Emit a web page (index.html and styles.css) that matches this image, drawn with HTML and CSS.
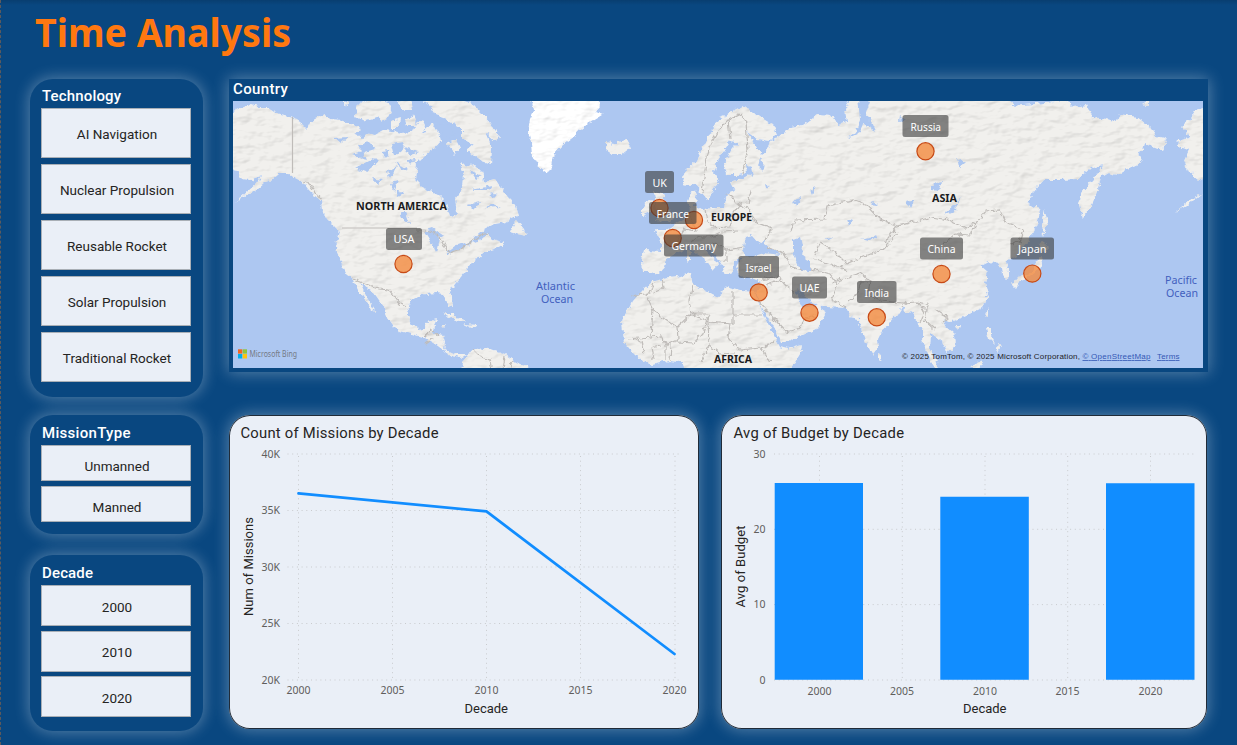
FILE: index.html
```html
<!DOCTYPE html>
<html lang="en">
<head>
<meta charset="utf-8">
<title>Time Analysis</title>
<link rel="stylesheet" href="styles.css">
</head>
<body>
<div class="page">
  <h1 class="title"><svg width="270" height="60"><text x="0" y="47" textLength="256" lengthAdjust="spacingAndGlyphs">Time Analysis</text></svg></h1>
  <div class="board">
    <aside class="sidebar">
      <section class="panel tech">
        <h2>Technology</h2>
        <button>AI Navigation</button>
        <button>Nuclear Propulsion</button>
        <button>Reusable Rocket</button>
        <button>Solar Propulsion</button>
        <button>Traditional Rocket</button>
      </section>
      <section class="panel mission">
        <h2>MissionType</h2>
        <button>Unmanned</button>
        <button>Manned</button>
      </section>
      <section class="panel decade">
        <h2>Decade</h2>
        <button>2000</button>
        <button>2010</button>
        <button>2020</button>
      </section>
    </aside>
    <main class="content">
      <section class="map-card">
        <h2>Country</h2>
        <svg class="map" viewBox="233 101 970 267">
          <defs>
            <filter id="relief" x="233" y="95" width="970" height="280" filterUnits="userSpaceOnUse" color-interpolation-filters="sRGB">
              <feTurbulence type="fractalNoise" baseFrequency="0.2" numOctaves="3" seed="4" result="n"/>
              <feDisplacementMap in="SourceGraphic" in2="n" scale="6" xChannelSelector="R" yChannelSelector="G" result="land"/>
              <feTurbulence type="fractalNoise" baseFrequency="0.05 0.1" numOctaves="3" seed="9" result="h"/>
              <feDiffuseLighting in="h" surfaceScale="0.75" diffuseConstant="1.13" lighting-color="#fff" result="light"><feDistantLight azimuth="225" elevation="62"/></feDiffuseLighting>
              <feBlend in="land" in2="light" mode="multiply" result="b"/>
              <feComposite in="b" in2="land" operator="in"/>
            </filter>
            <filter id="rough" x="233" y="95" width="970" height="280" filterUnits="userSpaceOnUse">
              <feTurbulence type="fractalNoise" baseFrequency="0.2" numOctaves="2" seed="3" result="n"/>
              <feDisplacementMap in="SourceGraphic" in2="n" scale="6" xChannelSelector="R" yChannelSelector="G"/>
            </filter>
          </defs>
          <rect x="233" y="101" width="970" height="267" fill="#adc7f1"/>
          <g class="land" filter="url(#relief)">
            <!-- North and Central America -->
            <path d="M225 116L238 109 244 107 252 104 260 107 268 107 277 113 292 117 300 122 307 129 310 123 315 119 325 114 330 119 342 120 358 127 366 133 375 135 384 130 392 131 402 133 412 132 416 124 422 119 425 125 423 133 430 131 438 129 441 141 433 150 425 155 417 163 415 179 425 189 438 195 446 203 450 216 454 219 457 212 455 199 463 189 464 175 460 163 468 166 475 165 482 172 485 182 495 179 502 189 508 197 515 205 518 215 505 222 494 224 485 229 474 238 466 246 477 241 488 235 493 239 505 243 497 248 482 253 476 260 472 262 465 272 455 284 450 292 452 299 453 307 449 306 443 294 437 293 425 294 412 299 409 306 408 315 412 325 418 330 425 329 427 322 437 319 434 325 433 333 443 335 445 342 444 349 455 354 466 354 460 358 449 355 438 346 425 338 412 334 400 331 392 325 387 318 385 309 378 300 371 290 360 283 364 292 369 301 376 312 371 310 366 301 358 290 353 279 347 274 341 262 337 252 336 245 340 232 335 227 327 219 322 210 321 201 314 195 308 189 303 182 295 178 288 173 278 173 270 180 265 182 258 188 247 195 235 203 247 192 257 183 262 176 250 180 242 179 237 171 225 169Z"/>
            <path d="M462 380L463 361 472 349 477 350 485 347 494 350 505 354 515 362 530 368 530 380Z"/>
            <!-- Arctic islands -->
            <path d="M355 115L358 105 371 98 388 102 392 109 386 121 377 118 366 121ZM397 101L414 98 417 109 402 111ZM391 121L401 118 398 128 391 128ZM405 120L416 114 415 126 407 126ZM420 98L452 96 467 101 474 106 485 117 493 127 500 137 496 142 486 133 492 147 491 164 482 161 474 155 467 150 473 145 462 138 462 128 447 119 436 115 430 106ZM424 128L433 124 437 134 428 135ZM447 144L456 140 460 148 455 155ZM344 100L350 103 344 105Z"/>
            <path d="M516 220L524 229 526 236 517 234 511 232Z"/>
            <path d="M443 314L453 314 466 321 459 321ZM463 324L479 325 474 329ZM440 325L445 325 443 327ZM242 318L248 321 254 324"/>
            <!-- Greenland, Iceland and British Isles -->
            <path class="ice" d="M524 96L532 101 534 111 530 119 528 131 531 143 532 155 537 165 548 173 552 166 554 155 563 145 575 136 578 131 588 124 603 115 595 112 600 106 598 96Z"/>
            <path d="M606 141L612 142 611 147 617 142 627 140 630 148 622 154 612 154 606 150Z"/>
            <path d="M642 207L650 200 655 204 653 211 642 216ZM654 192L666 195 662 202 668 208 675 216 669 222 655 221 662 215 657 209Z"/>
            <!-- Eurasia -->
            <path d="M681 185L685 171 695 162 702 149 708 138 715 124 730 112 743 106 757 115 773 125 777 134 770 141 757 139 747 132 757 148 762 154 766 151 770 142 782 135 790 127 803 125 817 115 833 116 838 125 847 122 845 109 853 97 1013 97 1013 106 1067 101 1073 107 1087 105 1092 117 1107 119 1117 122 1120 114 1137 117 1150 127 1157 137 1168 140 1163 150 1150 145 1145 143 1143 150 1138 153 1142 162 1127 169 1117 175 1108 173 1101 177 1098 189 1093 202 1083 219 1079 205 1082 192 1093 179 1103 165 1090 169 1077 179 1060 180 1043 180 1033 192 1028 204 1040 209 1038 222 1032 235 1017 255 1005 262 1009 269 1008 279 1003 278 1001 268 998 264 989 262 981 266 988 272 985 282 988 295 982 308 963 317 950 322 943 319 945 326 955 335 956 345 947 353 943 342 931 333 930 350 936 360 940 372 932 365 927 352 923 340 923 329 917 324 913 312 906 313 902 307 897 315 889 324 883 329 878 339 879 347 873 355 867 345 862 332 859 319 850 317 846 308 827 307 808 302 797 290 796 293 803 308 814 306 820 302 825 315 818 328 803 335 785 342 781 342 777 332 769 320 760 304 757 293 761 282 754 279 740 277 736 267 741 258 733 262 732 272 726 274 722 265 716 256 706 246 700 245 712 258 719 263 713 270 707 261 697 254 691 248 684 250 676 253 667 258 665 267 659 274 650 272 643 272 642 260 644 250 661 251 661 240 654 230 667 230 678 222 687 217 690 211 688 200 693 190 697 193 694 206 703 209 715 208 724 208 727 193 735 190 731 182 745 177 753 172 738 175 727 175 724 163 732 149 738 143 730 141 724 151 718 160 714 172 719 183 712 192 707 200 701 193 696 183 689 186Z"/>
            <!-- Africa -->
            <path d="M642 291L652 282 662 279 677 277 691 273 694 285 704 290 719 298 725 286 740 290 755 291 757 299 763 313 771 330 780 347 787 349 802 345 800 354 789 372 685 372 681 362 668 361 652 365 641 360 634 354 624 342 623 333 622 320 627 312 632 302Z"/>
            <!-- Pacific islands and western Alaska -->
            <path d="M1044 209L1048 222 1045 230 1043 236 1042 220ZM1041 241L1049 247 1044 252 1037 250ZM1041 257L1042 265 1037 271 1027 279 1020 281 1016 288 1012 284 1019 276 1031 273 1037 260ZM988 309L988 315 985 317ZM986 328L991 328 991 336 995 345 988 338ZM998 343L1002 345 996 352ZM956 325L960 325 958 329ZM970 367L982 361 980 370ZM1210 106L1196 110 1190 120 1181 126 1188 133 1190 138 1179 140 1178 147 1189 150 1184 161 1188 171 1199 180 1210 184ZM1203 193L1188 205 1175 212 1190 200ZM878 353L882 355 881 361 878 360ZM1142 104L1149 100 1149 106ZM687 252L690 250 690 262 687 263ZM719 117L725 115 723 120Z"/>
          </g>
          <g class="water" filter="url(#rough)">
            <!-- lakes, inland seas and gulfs -->
            <path d="M746 237L752 235 760 244 768 238 764 244 781 255 764 253 748 258 743 251ZM793 240L801 237 803 246 802 256 810 262 810 272 801 271 797 262 793 252ZM797 289L809 298 814 305 804 303ZM858 98L860 120 855 133 847 139 860 133 864 124 876 131 871 120 865 116 870 102ZM760 157L764 163 762 172 758 166ZM746 165L751 167 753 177 747 173ZM944 215L955 205 961 196 955 210ZM1010 101L1015 105 1022 101 1018 96 1010 96Z"/>
            <path d="M424 231L433 228 443 235 439 239 436 252 432 244ZM447 255L459 249 467 247 464 242 458 244 447 252ZM400 212L406 212 410 224 404 222ZM354 133L365 127 374 129 362 137ZM334 138L348 137 340 143ZM358 146L369 142 375 149 362 153ZM352 154L362 151 366 160ZM355 168L374 158 378 162 366 172ZM391 144L404 142 401 151 394 156ZM388 171L397 166 390 178ZM390 183L398 181 394 192ZM396 162L402 171 408 170ZM372 178L382 180 377 184ZM404 147L418 152 410 156ZM380 151L391 150 386 158ZM396 190L404 194 398 197ZM407 160L416 159 411 165Z"/>
            <path d="M410 98L424 100 421 112 424 119 417 121 412 109ZM434 125L450 123 455 134 448 139 440 132ZM794 200L801 198 796 207ZM810 190L815 187 812 194ZM861 239L877 235 870 241ZM871 204L873 201 878 204 874 207ZM847 219L852 221 849 226ZM825 238L832 237 828 241ZM932 184L941 182 939 191 932 190ZM957 158L965 163 959 168ZM900 115L906 120 899 122ZM765 184L770 186 766 188ZM907 202L914 200 910 208Z"/>
            <path d="M470 170L482 176 476 179ZM470 190L492 186 489 190ZM467 205L480 202 476 209ZM485 208L493 204 500 207ZM489 193L498 195 495 198Z"/>
          </g>
          <g class="borders" filter="url(#rough)">
            <path d="M307 181L316 193 321 199M417 230L425 230 434 232 443 241 449 253 462 249 480 235 490 233M353 279L379 289 389 290 400 304 406 307M425 336L431 330 439 336M303 182L307 181M425 344L433 338"/>
            <path d="M702 192L705 170 709 148 719 129 728 120 739 114 746 122 748 150 742 174M728 120L730 139M727 193L738 204 750 210 755 222 771 228 765 240M748 204L751 190M710 228L730 227 733 213 742 201M690 213L696 231 684 229 676 241M690 241L700 237 712 237 723 232 737 231M713 242L726 250 744 247M726 250L726 262M705 209L707 222 717 228M791 232L795 220 825 219 828 206 852 200 867 206 878 218 897 226 914 222 932 217 948 220 965 228 977 222 986 211 1000 210 1006 222 1023 230 1019 242 1011 244M897 226L888 237 886 248 863 257 847 264 835 252 820 243 815 255M812 258L834 265 848 271M767 247L785 255 791 267 803 270M762 280L778 276 786 286 795 292M765 285L780 280M757 300L786 332 801 328 803 320 817 315M810 268L830 274 838 285 831 300 847 308M831 283L851 276 861 273 870 281 868 295 880 301 903 303 917 302 924 310 920 322M848 302L858 292 861 281 870 281M917 302L928 304 925 320 935 329M935 309L948 318 942 323M886 248L898 232M977 222L970 235 955 234 943 244M906 301L902 307"/>
            <path d="M654 281L650 293 631 296M645 293L653 309 651 337 627 339M651 309L677 327 691 314 709 314M693 285L689 300 691 313 708 322 733 324V292M677 327L678 340 666 345 661 336 651 337M644 353L641 342 633 338M653 360L651 348 661 346M666 345V360M671 344L670 361M709 314L703 333 694 343 676 342M708 322L709 345 700 362M733 315H762M730 324L728 338 739 350 762 348 774 341M762 348L770 363M709 345L720 354 734 353M662 278L664 288 653 293"/>
            <path d="M473 350L480 357 490 360 492 370M505 356L503 370M512 362L508 370"/>
          </g>
          <path class="borders" d="M292.500 117V173M342 228H417"/>
          <g class="region">
            <text x="356" y="210" textLength="91" lengthAdjust="spacingAndGlyphs">NORTH AMERICA</text>
            <text x="711" y="221" textLength="41" lengthAdjust="spacingAndGlyphs">EUROPE</text>
            <text x="932" y="202" textLength="25" lengthAdjust="spacingAndGlyphs">ASIA</text>
            <text x="714" y="363" textLength="38" lengthAdjust="spacingAndGlyphs">AFRICA</text>
          </g>
          <g class="ocean">
            <text x="536" y="290" textLength="39" lengthAdjust="spacingAndGlyphs">Atlantic</text><text x="541" y="303" textLength="32" lengthAdjust="spacingAndGlyphs">Ocean</text>
            <text x="1165" y="284" textLength="32" lengthAdjust="spacingAndGlyphs">Pacific</text><text x="1166" y="297" textLength="32" lengthAdjust="spacingAndGlyphs">Ocean</text>
          </g>
          <g class="dots">
            <circle cx="403.5" cy="264" r="8.6"/><circle cx="659.5" cy="208" r="8.6"/><circle cx="694" cy="220" r="8.6"/><circle cx="672.7" cy="238" r="8.6"/><circle cx="758.7" cy="292.4" r="8.6"/><circle cx="809.5" cy="312.7" r="8.6"/><circle cx="876.8" cy="317.3" r="8.6"/><circle cx="941.5" cy="274" r="8.6"/><circle cx="925.5" cy="151.3" r="8.6"/><circle cx="1032.3" cy="273.6" r="8.6"/>
          </g>
          <g class="tags">
            <rect x="386" y="228" width="36" height="22" rx="2.500"/><rect x="645" y="171" width="29" height="22" rx="2.500"/><rect x="649" y="202" width="47.500" height="22" rx="2.500"/><rect x="664" y="234.500" width="59.500" height="22" rx="2.500"/><rect x="738.500" y="256" width="40.500" height="22" rx="2.500"/><rect x="792" y="276.500" width="35" height="22" rx="2.500"/><rect x="857" y="281" width="39.500" height="22" rx="2.500"/><rect x="920" y="237.500" width="43" height="22" rx="2.500"/><rect x="902.500" y="115" width="46" height="22" rx="2.500"/><rect x="1010.500" y="237.500" width="43.500" height="22" rx="2.500"/>
            <text x="393.500" y="243" textLength="21" lengthAdjust="spacingAndGlyphs">USA</text><text x="652.500" y="187" textLength="14.500" lengthAdjust="spacingAndGlyphs">UK</text><text x="656.500" y="218" textLength="32.500" lengthAdjust="spacingAndGlyphs">France</text><text x="671.500" y="250" textLength="45" lengthAdjust="spacingAndGlyphs">Germany</text><text x="745.500" y="272" textLength="26" lengthAdjust="spacingAndGlyphs">Israel</text><text x="799.500" y="292" textLength="20" lengthAdjust="spacingAndGlyphs">UAE</text><text x="864.500" y="297" textLength="24.500" lengthAdjust="spacingAndGlyphs">India</text><text x="927.500" y="253" textLength="28" lengthAdjust="spacingAndGlyphs">China</text><text x="910.500" y="131" textLength="30.500" lengthAdjust="spacingAndGlyphs">Russia</text><text x="1018" y="253" textLength="28.500" lengthAdjust="spacingAndGlyphs">Japan</text>
          </g>
          <path fill="#f26522" d="M238 349.300h4.300v4.300H238z"/><path fill="#8dc63f" d="M242.700 349.300h4.300v4.300h-4.300z"/><path fill="#00aeef" d="M238 354h4.300v4.500H238z"/><path fill="#ffc20e" d="M242.700 354h4.300v4.500h-4.300z"/>
          <text class="bing" x="249.500" y="357" textLength="47.500" lengthAdjust="spacingAndGlyphs">Microsoft Bing</text>
          <g class="credit"><text x="902" y="359" textLength="178">© 2025 TomTom, © 2025 Microsoft Corporation,</text><text class="link" x="1082.500" y="359" textLength="68">© OpenStreetMap</text><text class="link" x="1157" y="359" textLength="22.500">Terms</text></g>
        </svg>
      </section>
      <div class="charts">
        <section class="chart">
          <svg width="470" height="314" viewBox="229 415 470 314">
            <text class="heading" x="240.500" y="438" textLength="198">Count of Missions by Decade</text>
            <path class="gridline" d="M287.500 454H681M287.500 510.500H681M287.500 567H681M287.500 623.500H681M287.500 680H681M298.500 456V680M392.500 456V680M486.500 456V680M580.500 456V680M675 456V680"/>
            <g class="tick end"><text x="280" y="458">40K</text><text x="280" y="514">35K</text><text x="280" y="571">30K</text><text x="280" y="627">25K</text><text x="280" y="684">20K</text></g>
            <g class="tick mid"><text x="298.500" y="694">2000</text><text x="392.500" y="694">2005</text><text x="486.500" y="694">2010</text><text x="580.500" y="694">2015</text><text x="674.500" y="694">2020</text></g>
            <path class="line" d="M298.500 493.300L486.500 511.400L674.500 654"/>
            <text class="axis" x="464.500" y="713" textLength="43.500">Decade</text>
            <text class="axis" transform="translate(253 616) rotate(-90)" textLength="99">Num of Missions</text>
          </svg>
        </section>
        <section class="chart">
          <svg width="486" height="314" viewBox="721 415 486 314">
            <text class="heading" x="733.500" y="438" textLength="170.500">Avg of Budget by Decade</text>
            <path class="gridline" d="M774 454H1195M774 529.300H1195M774 604.600H1195M774 680H1195M819.500 456V680M902.300 456V680M985 456V680M1067.700 456V680M1150.500 456V680"/>
            <g class="tick end"><text x="765.500" y="458">30</text><text x="765.500" y="533">20</text><text x="765.500" y="608">10</text><text x="765.500" y="684">0</text></g>
            <g class="tick mid"><text x="819.500" y="695">2000</text><text x="902" y="695">2005</text><text x="985" y="695">2010</text><text x="1067.500" y="695">2015</text><text x="1150.500" y="695">2020</text></g>
            <path class="bar" d="M774.700 483H863v196.700h-88.300zM940.300 496.700h88.500v183h-88.500zM1106 483.300h88.500v196.400H1106z"/>
            <text class="axis" x="963" y="713" textLength="43.500">Decade</text>
            <text class="axis" transform="translate(745 607.500) rotate(-90)" textLength="82">Avg of Budget</text>
          </svg>
        </section>
      </div>
    </main>
  </div>
</div>
</body>
</html>
```
FILE: styles.css
```css
* { box-sizing: border-box; }
body { margin: 0; background: #094780; overflow: hidden; }
.page { width: 1237px; height: 745px; padding-left: 29px; border-left: 1px dashed #5d5a5c; background: linear-gradient(#083e70, #094780 5px); font-family: Roboto, "Liberation Sans", sans-serif; }
.title { margin: 0; height: 79px; padding-left: 5px; font: 700 40px "Noto Sans", "Open Sans", sans-serif; }
.title svg { display: block; fill: #ff7810; }
.board { display: flex; gap: 26px; }
.sidebar { width: 173px; display: flex; flex-direction: column; }
.panel { border-radius: 23px; background: #094780; box-shadow: 0 0 15px 1px rgba(255, 255, 255, .32); padding: 8px 12px 0 11px; display: flex; flex-direction: column; }
h2 { margin: 0; color: #fff; font-size: 15px; font-weight: 500; line-height: 18px; letter-spacing: .15px; padding-left: 1px; }
button { display: block; width: 150px; padding: 2px 0 0 2px; border: 1px solid #a9afb6; outline: 0; background: #eaeff7; color: #252423; font: 400 13.5px Roboto, sans-serif; flex: none; text-align: center; }
.tech { height: 318px; margin-bottom: 18px; gap: 6px; }
.tech h2 { margin-bottom: -3px; }
.tech button { height: 50px; }
.mission { height: 119px; margin-bottom: 21px; gap: 5px; padding-top: 9px; }
.mission h2 { margin-bottom: -2px; letter-spacing: .3px; }
.mission button { height: 36px; padding-top: 6px; }
.decade { height: 176px; gap: 4.500px; padding-top: 9px; }
.decade h2 { margin-bottom: -1.500px; }
.decade button { height: 41px; }
.content { width: 979px; }
.map-card { height: 293px; padding: 1px 5px 4px 4px; background: #094780; box-shadow: 0 0 15px 1px rgba(255, 255, 255, .32); }
.map-card h2 { height: 21px; padding-left: 0; letter-spacing: .35px; }
.map { display: block; width: 970px; height: 267px; font-family: "Noto Sans", "Open Sans", sans-serif; }
.land { fill: #f1f0ed; }
.land .ice { fill: #fff; }
.water { fill: #adc7f1; }
.borders { fill: none; stroke: #bfbcb9; stroke-width: 1.200; }
.region { font-weight: 700; font-size: 11px; fill: #1b1b1d; }
.ocean { font-size: 11px; fill: #4260be; }
.dots circle { fill: rgba(244, 139, 63, .8); stroke: #c74a16; stroke-width: 1.200; }
.tags rect { fill: rgba(56, 56, 56, .6); }
.tags text { fill: #fff; font-size: 11px; }
.bing { font-size: 8px; fill: #747a86; }
.credit { font: 8px "Liberation Sans", sans-serif; fill: #1c1c1e; }
.credit .link { fill: #3458b5; text-decoration: underline; }
.charts { display: flex; gap: 22px; margin-top: 43px; }
.chart { width: 470px; height: 314px; border-radius: 21px; background: #eaeff7; box-shadow: inset 0 0 0 1px #202b38, 0 0 15px 1px rgba(255, 255, 255, .32); }
.chart + .chart { width: 486px; }
.chart svg { display: block; }
.heading { font-size: 14.800px; fill: #252423; }
.axis { font-size: 13px; fill: #252423; }
.tick { font: 10.500px "Noto Sans", "Open Sans", sans-serif; fill: #605e5c; }
.end { text-anchor: end; }
.mid { text-anchor: middle; }
.gridline { stroke: #c9cbce; stroke-width: 1; stroke-dasharray: 1 3.700; fill: none; }
.line { stroke: #118dff; stroke-width: 2.700; fill: none; stroke-linejoin: round; stroke-linecap: round; }
.bar { fill: #118dff; }
```
